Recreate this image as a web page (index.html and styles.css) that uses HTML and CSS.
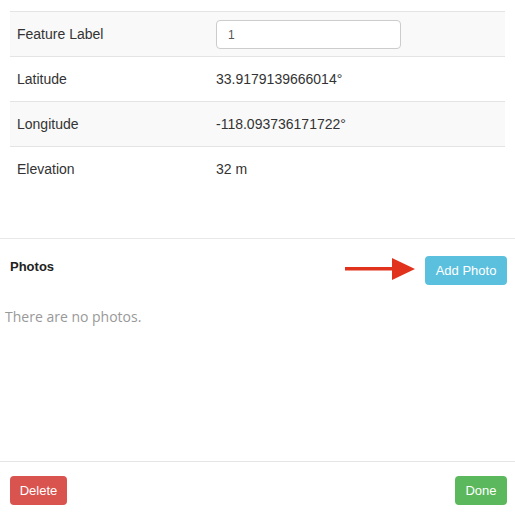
FILE: index.html
```html
<!DOCTYPE html>
<html lang="en">
<head>
<meta charset="UTF-8">
<meta name="viewport" content="width=device-width, initial-scale=1.0">
<title>Feature Details</title>
<link rel="stylesheet" href="styles.css">
</head>
<body>
<div class="details">
  <table class="info-table">
    <tr class="striped">
      <td class="label-cell">Feature Label</td>
      <td><input class="input-field" type="text" value="1"></td>
    </tr>
    <tr>
      <td class="label-cell">Latitude</td>
      <td>33.9179139666014&deg;</td>
    </tr>
    <tr class="striped">
      <td class="label-cell">Longitude</td>
      <td>-118.093736171722&deg;</td>
    </tr>
    <tr>
      <td class="label-cell">Elevation</td>
      <td>32 m</td>
    </tr>
  </table>
</div>

<div class="photos">
  <div class="photos-header">
    <h4>Photos</h4>
    <div class="add-wrap">
      <svg class="arrow" width="72" height="24" viewBox="0 0 72 24">
        <rect x="0" y="10" width="50" height="3.5" fill="#e0321c"/>
        <polygon points="47,1 70,12 47,23" fill="#e0321c"/>
      </svg>
      <button class="btn btn-info" type="button">Add Photo</button>
    </div>
  </div>
  <p class="empty">There are no photos.</p>
</div>

<div class="footer">
  <button class="btn btn-danger" type="button">Delete</button>
  <button class="btn btn-success" type="button">Done</button>
</div>
</body>
</html>
```

FILE: styles.css
```css
body {
  margin: 0;
  font-family: "Liberation Sans", Arial, sans-serif;
  color: #333;
  background-color: white;
  height: 512px;
  display: flex;
  flex-direction: column;
}
.details {
  height: 238px;
  padding: 11px 10px 0 10px;
  box-sizing: border-box;
}
.info-table {
  width: 495px;
  border-collapse: collapse;
  font-size: 14px;
}
.info-table td {
  height: 44px;
  border-top: 1px solid #e4e4e4;
  padding: 0 7px;
  vertical-align: middle;
}
.info-table .label-cell {
  width: 185px;
}
.striped td {
  background-color: #f9f9f9;
}
.input-field {
  width: 185px;
  height: 29px;
  box-sizing: border-box;
  border: 1px solid #ccc;
  border-radius: 4px;
  padding: 0 11px;
  font-family: "Liberation Sans", Arial, sans-serif;
  font-size: 12px;
  color: #555;
  background-color: white;
  margin-top: 1px;
}
.photos {
  height: 223px;
  border-top: 1px solid #e8e8e8;
  box-sizing: border-box;
}
.photos-header {
  display: flex;
  justify-content: space-between;
  align-items: flex-start;
  padding: 17px 8px 0 10px;
}
.photos-header h4 {
  margin: 0;
  padding-top: 3px;
  font-size: 13px;
  font-weight: bold;
  color: #222;
}
.add-wrap {
  display: flex;
  align-items: center;
  gap: 8px;
}
.arrow {
  display: block;
  margin-top: -3px;
}
.btn {
  font-family: "Liberation Sans", Arial, sans-serif;
  font-size: 13px;
  color: white;
  border: none;
  border-radius: 4px;
  height: 29px;
  padding: 0 6px;
  white-space: nowrap;
  cursor: pointer;
}
.btn-info {
  background-color: #5bc0de;
  width: 82px;
}
.btn-danger {
  background-color: #d9534f;
  width: 57px;
}
.btn-success {
  background-color: #5cb85c;
  width: 52px;
}
.empty {
  margin: 22px 0 0 5px;
  font-family: "Open Sans", sans-serif;
  font-size: 14px;
  color: #999;
}
.footer {
  flex: 1;
  border-top: 1px solid #e5e5e5;
  display: flex;
  justify-content: space-between;
  align-items: flex-start;
  padding: 14px 8px 0 10px;
}
```
